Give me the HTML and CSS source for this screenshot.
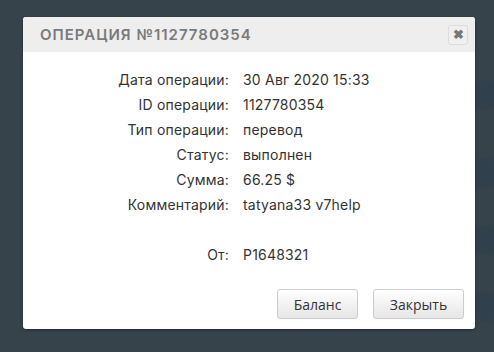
FILE: index.html
```html
<!DOCTYPE html>
<html lang="ru">
<head>
<meta charset="utf-8">
<link rel="stylesheet" href="styles.css">
</head>
<body>
<div class="bg">
  <span class="blob b1"></span>
  <span class="blob b2"></span>
  <span class="blob b3"></span>
  <span class="blob b4"></span>
</div>
<div class="dialog">
  <div class="head">
    <div class="title">ОПЕРАЦИЯ №1127780354</div>
    <button class="close" aria-label="close">✖</button>
  </div>
  <div class="body">
    <div class="grid">
      <div class="lbl">Дата операции:</div><div class="val">30 Авг 2020 15:33</div>
      <div class="lbl">ID операции:</div><div class="val">1127780354</div>
      <div class="lbl">Тип операции:</div><div class="val">перевод</div>
      <div class="lbl">Статус:</div><div class="val">выполнен</div>
      <div class="lbl">Сумма:</div><div class="val">66.25 $</div>
      <div class="lbl">Комментарий:</div><div class="val">tatyana33 v7help</div>
      <div class="lbl"></div><div class="val"></div>
      <div class="lbl">От:</div><div class="val">P1648321</div>
    </div>
  </div>
  <div class="foot">
    <button class="btn">Баланс</button>
    <button class="btn">Закрыть</button>
  </div>
</div>
</body>
</html>
```
FILE: styles.css
```css
html, body {
  margin: 0;
  padding: 0;
}
body {
  width: 494px;
  height: 352px;
  background: #37434b;
  overflow: hidden;
  font-family: "Inter", "Liberation Sans", sans-serif;
  position: relative;
}
.bg .blob {
  position: absolute;
  width: 30px;
  height: 30px;
  border-radius: 50%;
  background: #30414d;
  filter: blur(1px);
}
.b1 { left: 470px; top: 80px; }
.b2 { left: 470px; top: 158px; }
.b3 { left: 470px; top: 225px; }
.b4 { left: 470px; top: 292px; }
.dialog {
  position: absolute;
  left: 23px;
  top: 17px;
  width: 452px;
  height: 312px;
  background: #fff;
  border-radius: 3px;
  box-shadow: 0 1px 3px rgba(0,0,0,0.4);
  display: flex;
  flex-direction: column;
  overflow: hidden;
}
.head {
  height: 35px;
  background: #eeeeee;
  display: flex;
  align-items: center;
  justify-content: space-between;
  padding: 0 7px 0 17px;
}
.title {
  font-family: "Inter", sans-serif;
  font-weight: 600;
  font-size: 15px;
  letter-spacing: 1px;
  color: #7a7a7a;
}
.close {
  width: 20px;
  height: 20px;
  padding: 0;
  margin-top: 1px;
  border: 1px solid #dcdcdc;
  border-radius: 3px;
  background: #f0f0f0;
  color: #777;
  font-size: 13px;
  font-weight: 700;
  line-height: 18px;
  text-align: center;
}
.body {
  flex: 1;
  padding-top: 19px;
}
.grid {
  display: grid;
  grid-template-columns: 206px 1fr;
  column-gap: 14px;
  grid-auto-rows: 25px;
  font-size: 14px;
  letter-spacing: 0.2px;
  color: #333;
}
.lbl {
  text-align: right;
}
.foot {
  display: flex;
  justify-content: flex-end;
  gap: 15px;
  padding: 0 11px 10px 0;
}
.btn {
  height: 30px;
  padding: 0 14px;
  border: 1px solid #cccccc;
  border-radius: 3px;
  background: linear-gradient(#ffffff, #e6e6e6);
  font-family: "Open Sans", sans-serif;
  font-size: 14px;
  color: #333;
}
.btn:first-child { width: 81px; }
.btn:last-child { width: 91px; }
```
